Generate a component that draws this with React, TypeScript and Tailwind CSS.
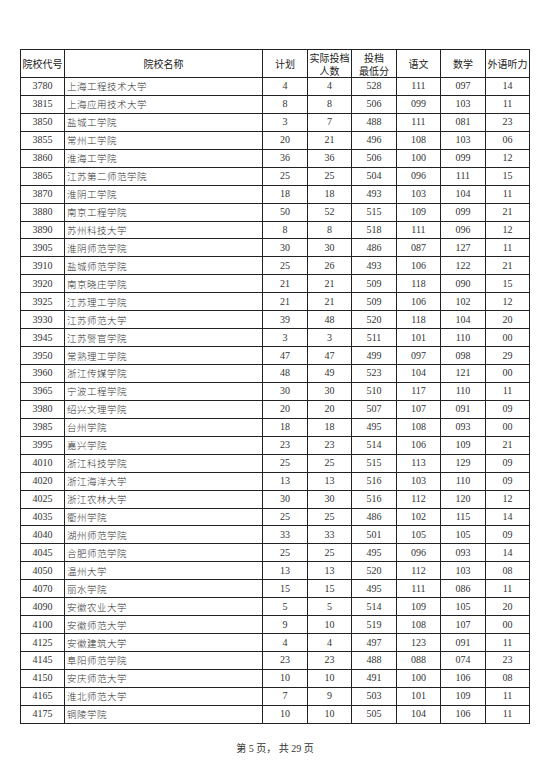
import React from "react";

const rows: [string, string, string, string, string, string, string, string][] = [
  ["3780", "上海工程技术大学", "4", "4", "528", "111", "097", "14"],
  ["3815", "上海应用技术大学", "8", "8", "506", "099", "103", "11"],
  ["3850", "盐城工学院", "3", "7", "488", "111", "081", "23"],
  ["3855", "常州工学院", "20", "21", "496", "108", "103", "06"],
  ["3860", "淮海工学院", "36", "36", "506", "100", "099", "12"],
  ["3865", "江苏第二师范学院", "25", "25", "504", "096", "111", "15"],
  ["3870", "淮阴工学院", "18", "18", "493", "103", "104", "11"],
  ["3880", "南京工程学院", "50", "52", "515", "109", "099", "21"],
  ["3890", "苏州科技大学", "8", "8", "518", "111", "096", "12"],
  ["3905", "淮阴师范学院", "30", "30", "486", "087", "127", "11"],
  ["3910", "盐城师范学院", "25", "26", "493", "106", "122", "21"],
  ["3920", "南京晓庄学院", "21", "21", "509", "118", "090", "15"],
  ["3925", "江苏理工学院", "21", "21", "509", "106", "102", "12"],
  ["3930", "江苏师范大学", "39", "48", "520", "118", "104", "20"],
  ["3945", "江苏警官学院", "3", "3", "511", "101", "110", "00"],
  ["3950", "常熟理工学院", "47", "47", "499", "097", "098", "29"],
  ["3960", "浙江传媒学院", "48", "49", "523", "104", "121", "00"],
  ["3965", "宁波工程学院", "30", "30", "510", "117", "110", "11"],
  ["3980", "绍兴文理学院", "20", "20", "507", "107", "091", "09"],
  ["3985", "台州学院", "18", "18", "495", "108", "093", "00"],
  ["3995", "嘉兴学院", "23", "23", "514", "106", "109", "21"],
  ["4010", "浙江科技学院", "25", "25", "515", "113", "129", "09"],
  ["4020", "浙江海洋大学", "13", "13", "516", "103", "110", "09"],
  ["4025", "浙江农林大学", "30", "30", "516", "112", "120", "12"],
  ["4035", "衢州学院", "25", "25", "486", "102", "115", "14"],
  ["4040", "湖州师范学院", "33", "33", "501", "105", "105", "09"],
  ["4045", "合肥师范学院", "25", "25", "495", "096", "093", "14"],
  ["4050", "温州大学", "13", "13", "520", "112", "103", "08"],
  ["4070", "丽水学院", "15", "15", "495", "111", "086", "11"],
  ["4090", "安徽农业大学", "5", "5", "514", "109", "105", "20"],
  ["4100", "安徽师范大学", "9", "10", "519", "108", "107", "00"],
  ["4125", "安徽建筑大学", "4", "4", "497", "123", "091", "11"],
  ["4145", "阜阳师范学院", "23", "23", "488", "088", "074", "23"],
  ["4150", "安庆师范大学", "10", "10", "491", "100", "106", "08"],
  ["4165", "淮北师范大学", "7", "9", "503", "101", "109", "11"],
  ["4175", "铜陵学院", "10", "10", "505", "104", "106", "11"],
];

const serif = "font-['Liberation_Serif','Noto_Sans_CJK_SC',serif]";

function Two({ a, b }: { a: string; b: string }) {
  return (
    <div className="flex flex-col items-center">
      <span className="block h-[13px] leading-[13px]">{a}</span>
      <span className="block h-[13px] leading-[13px]">{b}</span>
    </div>
  );
}

export default function App() {
  return (
    <div className="w-[550px] h-[777px] bg-white text-[#222] overflow-hidden">
      <div className="pt-[49px] pl-[20px]">
        <table className="table-fixed border-collapse w-[509px] border-[1.5px] border-[#222]">
          <colgroup>
            <col className="w-[44px]" />
            <col className="w-[198px]" />
            <col className="w-[45px]" />
            <col className="w-[44px]" />
            <col className="w-[45px]" />
            <col className="w-[44px]" />
            <col className="w-[45px]" />
            <col className="w-[44px]" />
          </colgroup>
          <thead>
            <tr className="h-[28px] font-['Noto_Sans_CJK_SC',sans-serif] text-[10px] leading-[12px] text-[#222]">
              <th className="border border-[#222] font-normal text-center p-0">院校代号</th>
              <th className="border border-[#222] font-normal text-center p-0">院校名称</th>
              <th className="border border-[#222] font-normal text-center p-0">计划</th>
              <th className="border border-[#222] font-normal text-center p-0">
                <Two a="实际投档" b="人数" />
              </th>
              <th className="border border-[#222] font-normal text-center p-0">
                <Two a="投档" b="最低分" />
              </th>
              <th className="border border-[#222] font-normal text-center p-0">语文</th>
              <th className="border border-[#222] font-normal text-center p-0">数学</th>
              <th className="border border-[#222] font-normal text-center p-0">外语听力</th>
            </tr>
          </thead>
          <tbody className={`${serif} text-[10px] leading-[12px] text-[#333]`}>
            {rows.map((r) => (
              <tr key={r[0]} className="h-[17.95px]">
                <td className="border border-[#222] text-center p-0">{r[0]}</td>
                <td className="border border-[#222] text-left pl-[2px] p-0 font-['Noto_Sans_CJK_SC',sans-serif] font-light text-[9.5px] tracking-[0.5px]">
                  {r[1]}
                </td>
                <td className="border border-[#222] text-center p-0">{r[2]}</td>
                <td className="border border-[#222] text-center p-0">{r[3]}</td>
                <td className="border border-[#222] text-center p-0">{r[4]}</td>
                <td className="border border-[#222] text-center p-0">{r[5]}</td>
                <td className="border border-[#222] text-center p-0">{r[6]}</td>
                <td className="border border-[#222] text-center p-0">{r[7]}</td>
              </tr>
            ))}
          </tbody>
        </table>
      </div>
      <div className={`mt-[19px] text-center ${serif} text-[10px] leading-[12px] text-[#333] whitespace-pre`}>
        第 5 页， 共 29 页
      </div>
    </div>
  );
}
